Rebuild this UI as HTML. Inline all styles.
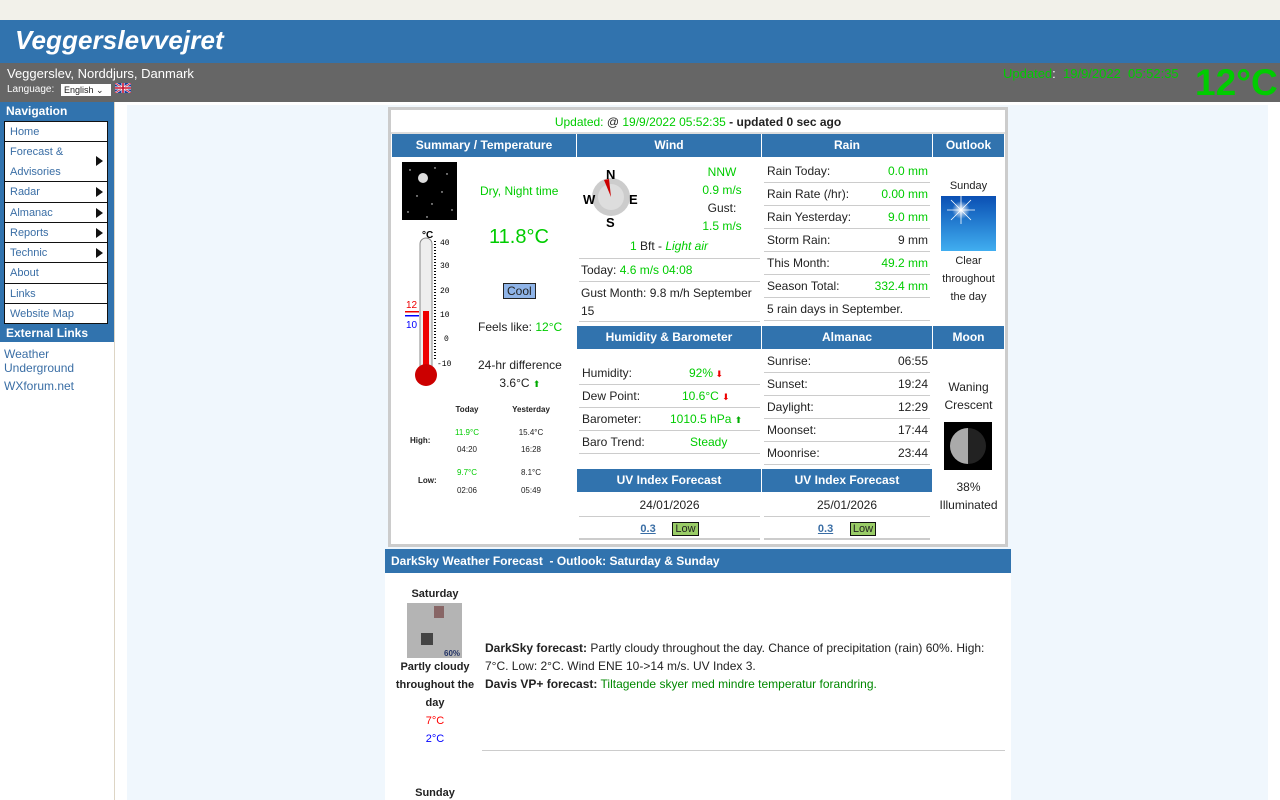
<!DOCTYPE html>
<html><head><meta charset="utf-8"><style>
*{margin:0;padding:0;box-sizing:border-box}
body{width:1280px;height:800px;overflow:hidden;background:#fff;font-family:"Liberation Sans",sans-serif;font-size:12px;color:#222;position:relative}
.a{position:absolute}
.g{color:#00cc00}
.hd{background:#3173ae;color:#fff;font-weight:bold;text-align:center;font-size:12px;line-height:23px}
.nav a{display:block;border:1px solid #111;border-top:none;background:#fff;color:#3a6ea5;font-size:11px;padding-left:5px;height:20.3px;line-height:20px;text-decoration:none;position:relative}
.tri{position:absolute;right:4px;top:5px;width:0;height:0;border-left:7px solid #111;border-top:5px solid transparent;border-bottom:5px solid transparent}
.row{position:absolute;left:0;right:0;height:23px;line-height:22px;border-bottom:1px solid #ccc;font-size:12px}
.row span.r{position:absolute;right:2px}
.row span.l{position:absolute;left:3px}
</style></head><body>
<div class="a" style="left:0;top:0;width:1280px;height:20px;background:#f2f1ea"></div>
<div class="a" style="left:0;top:20px;width:1280px;height:43px;background:#3173ae"></div>
<div class="a" style="left:15px;top:25px;color:#fff;font-size:26px;font-weight:bold;font-style:italic;letter-spacing:0.1px">Veggerslevvejret</div>
<div class="a" style="left:0;top:63px;width:1280px;height:39px;background:#666"></div>
<div class="a" style="left:7px;top:66px;color:#fff;font-size:13px">Veggerslev, Norddjurs, Danmark</div>
<div class="a" style="left:7px;top:84px;color:#fff;font-size:10px">Language:</div>
<div class="a" style="left:61px;top:84px;width:50px;height:12px;background:#fff;font-size:9px;line-height:12px;padding-left:3px">English ⌄</div>
<svg class="a" style="left:115px;top:83px" width="16" height="10"><rect width="16" height="10" fill="#1a3d9b"/><path d="M0 0L16 10M16 0L0 10" stroke="#fff" stroke-width="2"/><path d="M0 0L16 10M16 0L0 10" stroke="#c8102e" stroke-width=".8"/><path d="M8 0V10M0 5H16" stroke="#fff" stroke-width="3"/><path d="M8 0V10M0 5H16" stroke="#c8102e" stroke-width="1.6"/></svg>
<div class="a g" style="left:1003px;top:66px;font-size:13px">Updated<span style="color:#fff">:</span>&nbsp; 19/9/2022&nbsp; 05:52:35</div>
<div class="a g" style="left:1195px;top:62px;font-size:37px;font-weight:bold">12°C</div>

<div class="a" style="left:0;top:102px;width:114px;height:240px;background:#3173ae"></div>
<div class="a" style="left:114px;top:102px;width:1px;height:698px;background:#ddd5c5"></div>
<div class="a" style="left:6px;top:104px;color:#fff;font-weight:bold;font-size:12px">Navigation</div>
<div class="a nav" style="left:4px;top:121px;width:104px;border-top:1px solid #111">
<a>Home</a>
<a style="height:40px;line-height:20px">Forecast &amp;<br>Advisories<i class="tri" style="top:14px"></i></a>
<a>Radar<i class="tri"></i></a>
<a>Almanac<i class="tri"></i></a>
<a>Reports<i class="tri"></i></a>
<a>Technic<i class="tri"></i></a>
<a>About</a>
<a>Links</a>
<a>Website Map</a>
</div>
<div class="a" style="left:6px;top:326px;color:#fff;font-weight:bold;font-size:12px">External Links</div>
<div class="a" style="left:4px;top:347px;color:#3a6ea5;font-size:12px;line-height:14px">Weather<br>Underground</div>
<div class="a" style="left:4px;top:379px;color:#3a6ea5;font-size:12px">WXforum.net</div>

<div class="a" style="left:127px;top:105px;width:1141px;height:695px;background:#f0f7fd"></div>
<div class="a" style="left:388px;top:107px;width:620px;height:440px;background:#ccc"></div>
<div class="a" style="left:391px;top:110px;width:614px;height:434px;background:#fff"></div>
<div class="a" style="left:391px;top:110px;width:614px;height:24px;border-bottom:2px solid #ddd;text-align:center;line-height:24px;font-size:12px"><span class="g">Updated: </span>@ <span class="g">19/9/2022 05:52:35</span> <b>- updated 0 sec ago</b></div>

<div class="a hd" style="left:392px;top:134px;width:184px">Summary / Temperature</div>
<div class="a hd" style="left:577px;top:134px;width:184px">Wind</div>
<div class="a hd" style="left:762px;top:134px;width:170px">Rain</div>
<div class="a hd" style="left:933px;top:134px;width:71px">Outlook</div>
<div class="a hd" style="left:577px;top:326px;width:184px">Humidity &amp; Barometer</div>
<div class="a hd" style="left:762px;top:326px;width:170px">Almanac</div>
<div class="a hd" style="left:933px;top:326px;width:71px">Moon</div>
<div class="a hd" style="left:577px;top:469px;width:184px">UV Index Forecast</div>
<div class="a hd" style="left:762px;top:469px;width:170px">UV Index Forecast</div>

<svg class="a" style="left:402px;top:162px" width="55" height="58"><rect width="55" height="58" fill="#000"/><circle cx="21" cy="16" r="5" fill="#ddd"/><g fill="#fff"><circle cx="8" cy="8" r=".7"/><circle cx="33" cy="6" r=".7"/><circle cx="45" cy="12" r=".7"/><circle cx="15" cy="34" r=".7"/><circle cx="40" cy="30" r=".7"/><circle cx="30" cy="42" r=".7"/><circle cx="50" cy="48" r=".7"/><circle cx="6" cy="50" r=".7"/><circle cx="25" cy="55" r=".7"/></g></svg>
<div class="a g" style="left:480px;top:184px;font-size:12px">Dry, Night time</div>
<div class="a g" style="left:489px;top:226px;font-size:20px">11.8°C</div>
<div class="a" style="left:503px;top:283px;background:#8fb4e8;border:1px solid #222;font-size:12px;padding:0 3px;line-height:14px">Cool</div>
<div class="a" style="left:478px;top:320px;font-size:12px">Feels like: <span class="g">12°C</span></div>
<div class="a" style="left:478px;top:356px;font-size:12px;text-align:center;line-height:18px">24-hr difference<br>3.6°C <span style="color:#0a0;font-size:9px">⬆</span></div>
<svg class="a" style="left:404px;top:228px" width="56" height="160">
<text x="18" y="10" font-size="10" font-weight="bold" font-family="Liberation Sans">°C</text>
<rect x="16" y="10" width="12" height="140" rx="6" fill="#eee" stroke="#888"/>
<rect x="19" y="83" width="6" height="62" fill="#e00"/>
<circle cx="22" cy="147" r="11" fill="#c00"/>
<path d="M31 13V133" stroke="#000" stroke-width="2" stroke-dasharray="1 2"/>
<g font-size="8" font-family="Liberation Mono"><text x="36" y="17">40</text><text x="36" y="40">30</text><text x="36" y="65">20</text><text x="36" y="89">10</text><text x="40" y="113">0</text><text x="33" y="138">-10</text></g>
<text x="2" y="80" font-size="10" fill="#e00" font-family="Liberation Sans">12</text>
<rect x="1" y="83" width="14" height="1.5" fill="#e00"/><rect x="1" y="87" width="14" height="1.5" fill="#00f"/>
<text x="2" y="100" font-size="10" fill="#00f" font-family="Liberation Sans">10</text>
</svg>
<div class="a" style="left:392px;top:400px;width:184px;font-size:8px;text-align:center">
<div class="a" style="left:54px;top:5px;width:42px;font-weight:bold">Today</div>
<div class="a" style="left:112px;top:5px;width:54px;font-weight:bold">Yesterday</div>
<div class="a" style="left:18px;top:36px;font-weight:bold">High:</div>
<div class="a g" style="left:54px;top:28px;width:42px">11.9°C</div><div class="a" style="left:54px;top:45px;width:42px">04:20</div>
<div class="a" style="left:112px;top:28px;width:54px">15.4°C</div><div class="a" style="left:112px;top:45px;width:54px">16:28</div>
<div class="a" style="left:26px;top:76px;font-weight:bold">Low:</div>
<div class="a g" style="left:54px;top:68px;width:42px">9.7°C</div><div class="a" style="left:54px;top:86px;width:42px">02:06</div>
<div class="a" style="left:112px;top:68px;width:54px">8.1°C</div><div class="a" style="left:112px;top:86px;width:54px">05:49</div>
</div>

<svg class="a" style="left:582px;top:166px" width="60" height="62">
<circle cx="29" cy="31" r="19" fill="#ccc"/><circle cx="29" cy="31" r="13" fill="#ddd"/>
<path d="M29 31L22 14L27 13Z" fill="#c00"/>
<g font-weight="bold" font-size="13" font-family="Liberation Sans"><text x="24" y="13">N</text><text x="1" y="38">W</text><text x="47" y="38">E</text><text x="24" y="61">S</text></g></svg>
<div class="a" style="left:690px;top:163px;width:64px;text-align:center;font-size:12px;line-height:18px"><span class="g">NNW</span><br><span class="g">0.9 m/s</span><br>Gust:<br><span class="g">1.5 m/s</span></div>
<div class="a" style="left:577px;top:239px;width:184px;text-align:center;font-size:12px"><span class="g">1</span> Bft - <i class="g">Light air</i></div>
<div class="a" style="left:579px;top:258px;width:181px;height:64px;border-top:1px solid #ccc">
<div class="a" style="left:0;top:0;width:181px;height:23px;border-bottom:1px solid #ccc;line-height:22px;padding-left:2px">Today: <span class="g">4.6 m/s 04:08</span></div>
<div class="a" style="left:0;top:23px;width:181px;height:40px;border-bottom:1px solid #ccc;line-height:18px;padding:2px 0 0 2px">Gust Month: 9.8 m/h September 15</div>
</div>
<div class="a" style="left:579px;top:362px;width:181px">
<div class="row" style="top:0"><span class="l">Humidity:</span><span class="a g" style="left:110px">92%<span style="color:#e00;font-size:9px"> ⬇</span></span></div>
<div class="row" style="top:23px"><span class="l">Dew Point:</span><span class="a g" style="left:103px">10.6°C <span style="color:#e00;font-size:9px">⬇</span></span></div>
<div class="row" style="top:46px"><span class="l">Barometer:</span><span class="a g" style="left:91px">1010.5 hPa <span style="color:#0a0;font-size:9px">⬆</span></span></div>
<div class="row" style="top:69px"><span class="l">Baro Trend:</span><span class="a g" style="left:111px">Steady</span></div>
</div>
<div class="a" style="left:579px;top:492px;width:181px;height:48px">
<div class="row" style="top:0;text-align:center;line-height:26px;height:25px">24/01/2026</div>
<div class="row" style="top:25px;text-align:center;border-bottom:2px solid #ccc"><u style="color:#3a6ea5;font-weight:bold;font-size:11px">0.3</u>&nbsp;&nbsp;&nbsp;&nbsp;&nbsp;<span style="background:#9c6;border:1px solid #111;padding:0 2px;font-size:11px">Low</span></div>
</div>

<div class="a" style="left:764px;top:160px;width:166px">
<div class="row" style="top:0"><span class="l">Rain Today:</span><span class="r g">0.0 mm</span></div>
<div class="row" style="top:23px"><span class="l">Rain Rate (/hr):</span><span class="r g">0.00 mm</span></div>
<div class="row" style="top:46px"><span class="l">Rain Yesterday:</span><span class="r g">9.0 mm</span></div>
<div class="row" style="top:69px"><span class="l">Storm Rain:</span><span class="r">9 mm</span></div>
<div class="row" style="top:92px"><span class="l">This Month:</span><span class="r g">49.2 mm</span></div>
<div class="row" style="top:115px"><span class="l">Season Total:</span><span class="r g">332.4 mm</span></div>
<div class="row" style="top:138px"><span class="l">5 rain days in September.</span></div>
</div>
<div class="a" style="left:764px;top:350px;width:166px">
<div class="row" style="top:0"><span class="l">Sunrise:</span><span class="r">06:55</span></div>
<div class="row" style="top:23px"><span class="l">Sunset:</span><span class="r">19:24</span></div>
<div class="row" style="top:46px"><span class="l">Daylight:</span><span class="r">12:29</span></div>
<div class="row" style="top:69px"><span class="l">Moonset:</span><span class="r">17:44</span></div>
<div class="row" style="top:92px"><span class="l">Moonrise:</span><span class="r">23:44</span></div>
</div>
<div class="a" style="left:764px;top:492px;width:166px;height:48px">
<div class="row" style="top:0;text-align:center;line-height:26px;height:25px">25/01/2026</div>
<div class="row" style="top:25px;text-align:center;border-bottom:2px solid #ccc"><u style="color:#3a6ea5;font-weight:bold;font-size:11px">0.3</u>&nbsp;&nbsp;&nbsp;&nbsp;&nbsp;<span style="background:#9c6;border:1px solid #111;padding:0 2px;font-size:11px">Low</span></div>
</div>

<div class="a" style="left:933px;top:180px;width:71px;text-align:center;font-size:11px">Sunday</div>
<svg class="a" style="left:941px;top:196px" width="55" height="55"><defs><linearGradient id="sk" x1="0" y1="0" x2="0" y2="1"><stop offset="0" stop-color="#0a4fb3"/><stop offset="1" stop-color="#40aef0"/></linearGradient><radialGradient id="sn"><stop offset="0" stop-color="#fff"/><stop offset="1" stop-color="#fff" stop-opacity="0"/></radialGradient></defs><rect width="55" height="55" fill="url(#sk)"/><circle cx="20" cy="14" r="9" fill="url(#sn)"/><path d="M20 0V28M6 14H34M10 4L30 24M30 4L10 24" stroke="#fff" stroke-width=".8"/></svg>
<div class="a" style="left:933px;top:252px;width:71px;text-align:center;font-size:11px;line-height:18px">Clear<br>throughout<br>the day</div>
<div class="a" style="left:933px;top:378px;width:71px;text-align:center;font-size:12px;line-height:18px">Waning<br>Crescent</div>
<svg class="a" style="left:944px;top:422px" width="48" height="48"><rect width="48" height="48" fill="#000"/><circle cx="24" cy="24" r="18" fill="#222"/><path d="M24 6A18 18 0 0 0 24 42Z" fill="#aaa"/></svg>
<div class="a" style="left:933px;top:478px;width:71px;text-align:center;font-size:12px;line-height:18px">38%<br>Illuminated</div>

<div class="a" style="left:385px;top:549px;width:626px;height:251px;background:#fff"></div>
<div class="a" style="left:385px;top:549px;width:626px;height:24px;background:#3173ae;color:#fff;font-weight:bold;font-size:12px;line-height:24px;padding-left:6px">DarkSky Weather Forecast&nbsp; - Outlook: Saturday &amp; Sunday</div>
<div class="a" style="left:394px;top:588px;width:82px;text-align:center;font-size:11px;font-weight:bold">Saturday</div>
<svg class="a" style="left:407px;top:603px" width="55" height="55"><rect width="55" height="55" fill="#aaa"/><rect x="0" y="0" width="55" height="55" fill="#bbb" opacity=".6"/><rect x="14" y="30" width="12" height="12" fill="#444"/><rect x="27" y="3" width="10" height="12" fill="#866"/><text x="37" y="53" font-size="8" font-weight="bold" fill="#236" font-family="Liberation Sans">60%</text></svg>
<div class="a" style="left:394px;top:658px;width:82px;text-align:center;font-size:11px;font-weight:bold;line-height:18px">Partly cloudy throughout the day</div>
<div class="a" style="left:394px;top:715px;width:82px;text-align:center;font-size:11px;color:#f00">7°C</div>
<div class="a" style="left:394px;top:733px;width:82px;text-align:center;font-size:11px;color:#00f">2°C</div>
<div class="a" style="left:485px;top:639px;width:520px;font-size:12px;line-height:18px"><b>DarkSky forecast:</b> Partly cloudy throughout the day. Chance of precipitation (rain) 60%. High: 7°C. Low: 2°C. Wind ENE 10-&gt;14 m/s. UV Index 3.<br><b>Davis VP+ forecast:</b> <span style="color:#080">Tiltagende skyer med mindre temperatur forandring.</span></div>
<div class="a" style="left:482px;top:750px;width:523px;height:1px;background:#ccc"></div>
<div class="a" style="left:394px;top:787px;width:82px;text-align:center;font-size:11px;font-weight:bold">Sunday</div>
</body></html>
